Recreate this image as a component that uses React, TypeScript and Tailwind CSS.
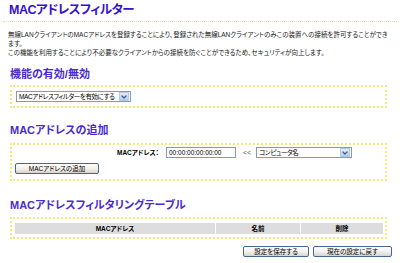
import { ChevronDown } from 'lucide-react';

const FakeSelect = ({ label, width }: { label: string; width: string }) => (
  <div className={`flex items-center h-[11px] border border-[#7f9db9] bg-white pl-[2px] pr-px ${width}`}>
    <span className="flex-1 whitespace-nowrap overflow-hidden text-[6.5px] leading-[9px] tracking-[-0.4px]">{label}</span>
    <span className="flex items-center justify-center w-[10px] h-[9px] bg-gradient-to-b from-[#e3ebfa] to-[#b9c9e8] border border-[#b5c6e6]">
      <ChevronDown className="w-[8px] h-[8px] text-[#4d6185]" strokeWidth={4} />
    </span>
  </div>
);

const XpButton = ({ children, width }: { children: string; width: string }) => (
  <button className={`flex items-center justify-center h-[11px] ${width} rounded-[2px] border border-[#44678f] bg-gradient-to-b from-[#ffffff] via-[#f1f1ee] to-[#d6d6d0] text-[6.5px] leading-[9px] text-black`}>
    {children}
  </button>
);

const App = () => {
  return (
    <div className="w-[400px] h-[263px] overflow-hidden bg-white text-black text-[7px] leading-[9px] font-['Liberation_Sans','Noto_Sans_CJK_JP',sans-serif] [font-feature-settings:'palt']">
      {/* Page title */}
      <div className="mx-[3px] h-[22px] border-b border-dotted border-[#f2e44a] pl-[6px] pt-[2px]">
        <h1 className="text-[12.5px] leading-[16px] font-bold text-[#3410d0] tracking-[-0.5px]">MACアドレスフィルター</h1>
      </div>

      {/* Description */}
      <div className="px-[8px] pt-[8px] text-[6.5px] leading-[9px] text-[#222]">
        <p>無線LANクライアントのMACアドレスを登録することにより、登録された無線LANクライアントのみこの装置への接続を許可することができます。</p>
        <p>この機能を利用することにより不必要なクライアントからの接続を防ぐことができるため、セキュリティが向上します。</p>
      </div>

      {/* Enable / disable */}
      <h2 className="mt-[10px] pl-[10px] text-[11px] leading-[14px] font-bold text-[#4a2bd0]">機能の有効/無効</h2>
      <div className="mt-[4px] ml-[10px] w-[377px] border-2 border-dotted border-[#f1ec78] pl-[4px] pt-[4px] pb-[4px]">
        <FakeSelect label="MACアドレスフィルターを有効にする" width="w-[115px]" />
      </div>

      {/* Add MAC address */}
      <h2 className="mt-[15px] pl-[10px] text-[11px] leading-[14px] font-bold text-[#4a2bd0]">MACアドレスの追加</h2>
      <div className="mt-[6px] ml-[10px] w-[377px] border-2 border-dotted border-[#f1ec78] pl-[3px] pt-[2px] pb-[5px]">
        <div className="flex items-center h-[11px]">
          <span className="w-[144px] text-right text-[6.5px] font-bold">MACアドレス：</span>
          <div className="ml-[7px] w-[70px] h-[11px] border border-[#7f9db9] bg-white pl-[2px] text-[6.5px] leading-[9px]">00:00:00:00:00:00</div>
          <span className="ml-[7px] text-[7px] text-[#555]">&lt;&lt;</span>
          <div className="ml-[5px]">
            <FakeSelect label="コンピュータ名" width="w-[96px]" />
          </div>
        </div>
        <div className="mt-[5px] flex">
          <XpButton width="w-[84px]">MACアドレスの追加</XpButton>
        </div>
      </div>

      {/* Filtering table */}
      <h2 className="mt-[17px] pl-[10px] text-[11px] leading-[14px] font-bold text-[#4a2bd0]">MACアドレスフィルタリングテーブル</h2>
      <div className="mt-[5px] ml-[10px] w-[377px] border-2 border-dotted border-[#f1ec78] pl-[3px] pr-[2px] pt-[4px] pb-[3px]">
        <div className="grid grid-cols-[200px_84px_1fr] gap-px h-[11px] text-[6.5px] font-bold">
          <div className="flex items-center justify-center bg-[#dddddd]">MACアドレス</div>
          <div className="flex items-center justify-center bg-[#dddddd]">名前</div>
          <div className="flex items-center justify-center bg-[#dddddd]">削除</div>
        </div>
      </div>

      {/* Actions */}
      <div className="mt-[7px] flex justify-end gap-[4px] pr-[8px]">
        <XpButton width="w-[66px]">設定を保存する</XpButton>
        <XpButton width="w-[79px]">現在の設定に戻す</XpButton>
      </div>
    </div>
  );
};

export default App;
